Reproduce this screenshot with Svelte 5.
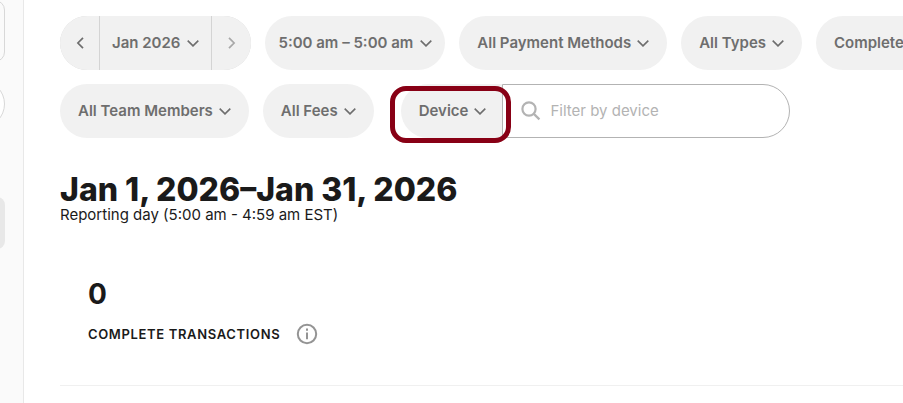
<script>
	let device = $state('');

	const filters = [
		{ label: '5:00 am – 5:00 am', wide: true },
		{ label: 'All Payment Methods' },
		{ label: 'All Types' },
		{ label: 'Complete' }
	];
	const moreFilters = [{ label: 'All Team Members' }, { label: 'All Fees' }];
</script>

{#snippet chevron()}
	<svg width="12" height="8" viewBox="0 0 12 8" aria-hidden="true" fill="none" stroke="currentColor" stroke-width="1.6">
		<path d="M.7 1.6 6 6.9l5.3-5.3" />
	</svg>
{/snippet}

<div class="layout">
	<nav class="sidebar" aria-label="Main">
		<div class="side-card"></div>
		<div class="side-search"></div>
		<div class="side-active"></div>
	</nav>

	<main>
		<div class="filters">
			<div class="filter-row">
				<div class="stepper">
					<button type="button" class="step" aria-label="Previous month">
						<svg width="8" height="12" viewBox="0 0 8 12" aria-hidden="true" fill="none" stroke="currentColor" stroke-width="1.7">
							<path d="M7 .8 1.9 6 7 11.2" />
						</svg>
					</button>
					<button type="button" class="month">Jan 2026 {@render chevron()}</button>
					<button type="button" class="step" aria-label="Next month" disabled>
						<svg width="8" height="12" viewBox="0 0 8 12" aria-hidden="true" fill="none" stroke="currentColor" stroke-width="1.7">
							<path d="M1 .8 6.1 6 1 11.2" />
						</svg>
					</button>
				</div>
				{#each filters as filter}
					<button type="button" class="pill" class:wide={filter.wide}>{filter.label} {@render chevron()}</button>
				{/each}
			</div>

			<div class="filter-row">
				{#each moreFilters as filter}
					<button type="button" class="pill">{filter.label} {@render chevron()}</button>
				{/each}
				<div class="device">
					<button type="button" class="pill device-type">Device {@render chevron()}</button>
					<label class="search">
						<svg width="20" height="20" viewBox="0 0 20 20" aria-hidden="true" fill="none" stroke="currentColor" stroke-width="2.2">
							<circle cx="8" cy="8" r="6.6" />
							<path d="m12.6 12.6 5.8 5.8" />
						</svg>
						<input type="text" placeholder="Filter by device" aria-label="Filter by device" bind:value={device} />
					</label>
					<span class="highlight"></span>
				</div>
			</div>
		</div>

		<header>
			<h1>Jan 1, 2026–Jan 31, 2026</h1>
			<p>Reporting day (5:00 am - 4:59 am EST)</p>
		</header>

		<section class="summary">
			<strong>0</strong>
			<div class="caption">
				<span>Complete transactions</span>
				<button type="button" class="info" aria-label="About complete transactions">
					<svg width="22" height="22" viewBox="0 0 22 22" aria-hidden="true" fill="none" stroke="currentColor" stroke-width="2">
						<circle cx="11" cy="11" r="9.2" />
						<path d="M11 9.4v6.8M11 5.6v2.2" />
					</svg>
				</button>
			</div>
		</section>
	</main>
</div>

<style>
	:global(body) {
		margin: 0;
		background: #fff;
	}

	.layout {
		display: grid;
		grid-template-columns: 24px minmax(0, 1fr);
		min-height: 100vh;
		overflow: hidden;
		font-family: Inter, 'Liberation Sans', sans-serif;
		color: #1a1a1a;
	}

	.sidebar {
		display: flex;
		flex-direction: column;
		align-items: flex-end;
		box-sizing: border-box;
		padding-right: 18px;
		overflow: hidden;
		background: #fafafa;
		border-right: 1px solid #e8e8e8;
	}

	.side-card,
	.side-search,
	.side-active {
		flex: none;
		box-sizing: border-box;
		width: 200px;
	}

	.side-card {
		height: 62px;
		border: 1px solid #d8d8d8;
		border-radius: 10px;
	}

	.side-search {
		height: 48px;
		margin-top: 18px;
		background: #fff;
		border: 1px solid #d8d8d8;
		border-radius: 24px;
	}

	.side-active {
		height: 52px;
		margin-top: 69px;
		background: #e8e8e8;
		border-radius: 8px;
	}

	main {
		padding: 16px 0 16px 36px;
	}

	button {
		padding: 0;
		border: none;
		background: #f1f1f1;
		color: #6e6e6e;
		font: 600 15px/24px Inter, 'Liberation Sans', sans-serif;
		white-space: nowrap;
		cursor: pointer;
	}

	.filters {
		display: grid;
		gap: 14px;
	}

	.filter-row {
		display: flex;
		gap: 14px;
	}

	.filter-row button {
		display: flex;
		flex: none;
		align-items: center;
		justify-content: center;
		gap: 6px;
		height: 54px;
	}

	.stepper {
		display: flex;
		flex: none;
		gap: 1px;
		overflow: hidden;
		background: #d4d4d4;
		border-radius: 27px;
	}

	.step {
		width: 39px;
	}

	.step:disabled {
		color: #a8a8a8;
		cursor: default;
	}

	.filter-row .month {
		gap: 7px;
		padding: 0 12px;
	}

	.pill {
		padding: 0 18px;
		border-radius: 27px;
	}

	.filter-row .wide {
		gap: 7px;
		padding: 0 13px;
	}

	.device {
		position: relative;
		display: flex;
		margin-left: 13px;
	}

	.device-type {
		padding-right: 16px;
		border-radius: 27px 0 0 27px;
	}

	.search {
		display: flex;
		align-items: center;
		gap: 9px;
		box-sizing: border-box;
		width: 288px;
		padding: 0 18px;
		border: 1px solid #b3b3b3;
		border-radius: 0 27px 27px 0;
		color: #b3b3b3;
	}

	.search svg {
		flex: none;
	}

	input {
		flex: 1;
		min-width: 0;
		padding: 0;
		border: none;
		outline: none;
		background: none;
		color: #1a1a1a;
		font: 400 15px/24px Inter, 'Liberation Sans', sans-serif;
	}

	input::placeholder {
		color: #b3b3b3;
		opacity: 1;
	}

	.highlight {
		position: absolute;
		top: 2px;
		left: -11px;
		box-sizing: border-box;
		width: 121px;
		height: 57px;
		border: 5px solid #880015;
		border-radius: 16px;
		pointer-events: none;
	}

	header {
		margin-top: 36px;
	}

	h1 {
		margin: 0;
		font-size: 32px;
		font-weight: 800;
		line-height: 32px;
	}

	p {
		margin: 0;
		font-size: 15px;
		line-height: 18px;
	}

	.summary {
		padding: 54px 28px 40px;
		border-bottom: 1px solid #f0f0f0;
	}

	strong {
		display: block;
		font-size: 28px;
		font-weight: 700;
		line-height: 32px;
	}

	.caption {
		display: flex;
		align-items: center;
		gap: 16px;
		margin-top: 13px;
		font-size: 13px;
		font-weight: 600;
		line-height: 22px;
		letter-spacing: 0.05em;
		text-transform: uppercase;
	}

	.info {
		display: flex;
		background: none;
		color: #949494;
	}
</style>
